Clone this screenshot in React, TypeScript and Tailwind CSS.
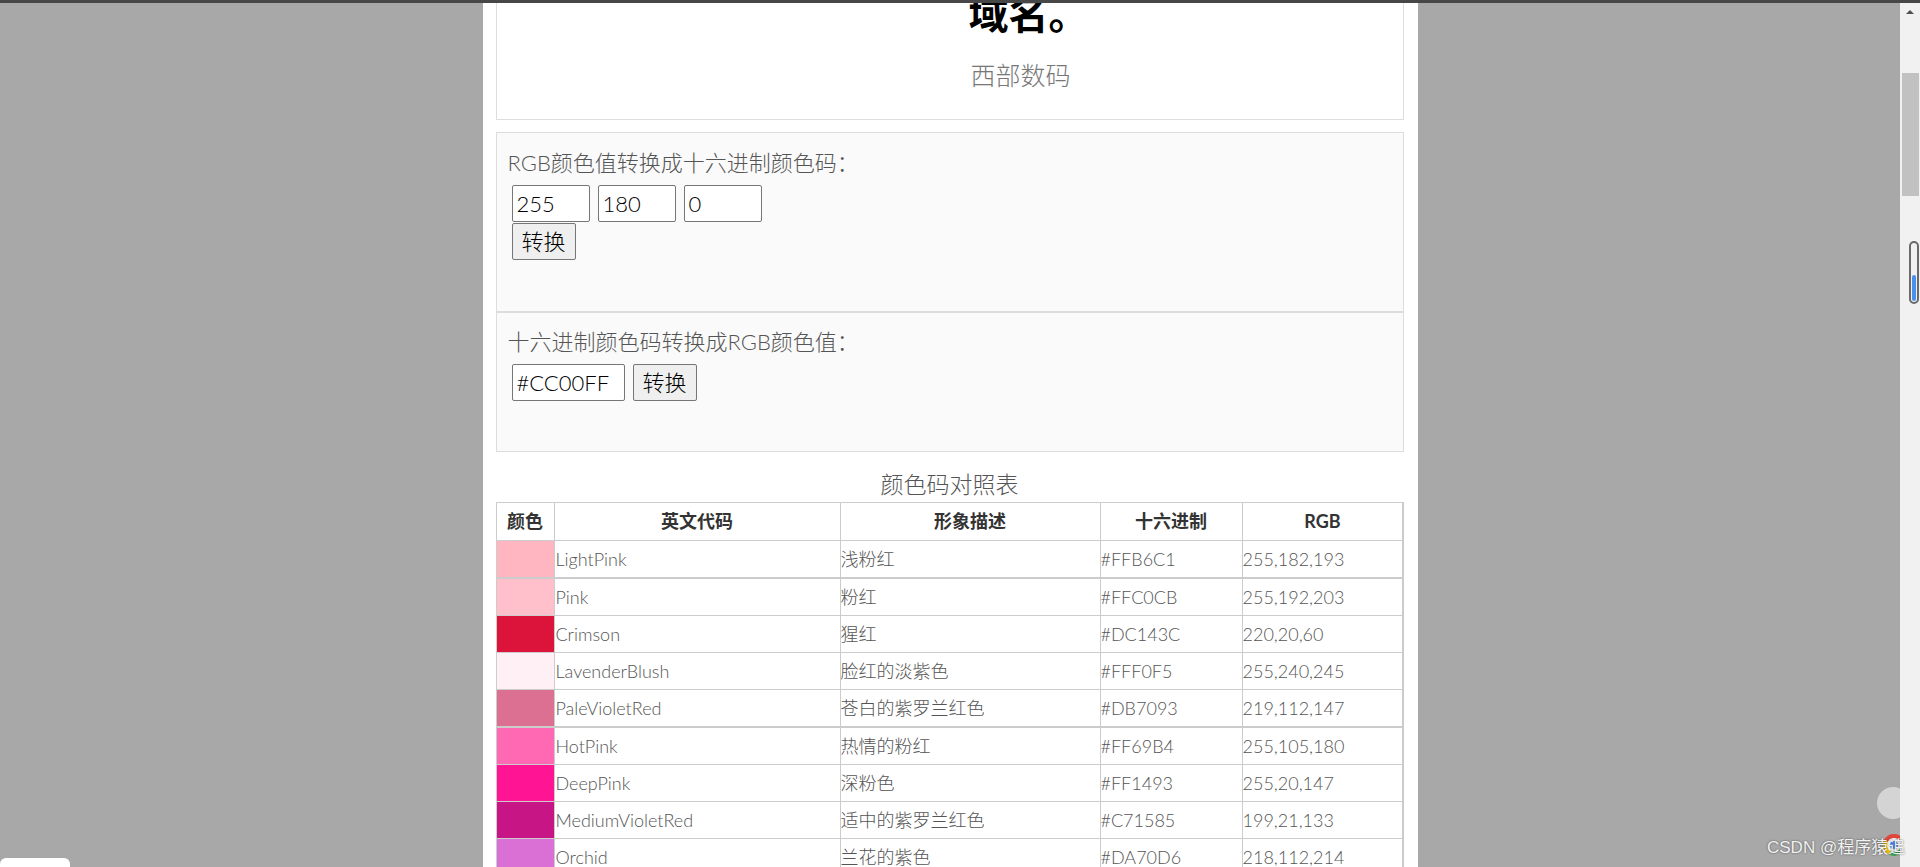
import React from "react";

type ColorRow = {
  swatch: string;
  name: string;
  desc: string;
  hex: string;
  rgb: string;
  thick?: boolean;
};

const rows: ColorRow[] = [
  { swatch: "bg-[#FFB6C1]", name: "LightPink", desc: "浅粉红", hex: "#FFB6C1", rgb: "255,182,193", thick: true },
  { swatch: "bg-[#FFC0CB]", name: "Pink", desc: "粉红", hex: "#FFC0CB", rgb: "255,192,203" },
  { swatch: "bg-[#DC143C]", name: "Crimson", desc: "猩红", hex: "#DC143C", rgb: "220,20,60" },
  { swatch: "bg-[#FFF0F5]", name: "LavenderBlush", desc: "脸红的淡紫色", hex: "#FFF0F5", rgb: "255,240,245" },
  { swatch: "bg-[#DB7093]", name: "PaleVioletRed", desc: "苍白的紫罗兰红色", hex: "#DB7093", rgb: "219,112,147", thick: true },
  { swatch: "bg-[#FF69B4]", name: "HotPink", desc: "热情的粉红", hex: "#FF69B4", rgb: "255,105,180" },
  { swatch: "bg-[#FF1493]", name: "DeepPink", desc: "深粉色", hex: "#FF1493", rgb: "255,20,147" },
  { swatch: "bg-[#C71585]", name: "MediumVioletRed", desc: "适中的紫罗兰红色", hex: "#C71585", rgb: "199,21,133" },
  { swatch: "bg-[#DA70D6]", name: "Orchid", desc: "兰花的紫色", hex: "#DA70D6", rgb: "218,112,214" },
];

const cols = "grid grid-cols-[58px_286px_260px_142px_160px]";

function Input({ value, w }: { value: string; w: string }) {
  return (
    <div
      className={`${w} h-[37px] rounded-[2px] border border-[#767676] bg-white pl-[4px] text-[22px] leading-[35px] font-light text-black`}
    >
      {value}
    </div>
  );
}

function Button() {
  return (
    <button className="h-[37px] w-[64px] rounded-[2px] border border-[#767676] bg-[#efefef] text-[22px] leading-[35px] text-black">
      转换
    </button>
  );
}

export default function App() {
  return (
    <div className="relative h-[867px] w-[1920px] overflow-hidden bg-[#a8a8a8] font-['Lato','Noto_Sans_CJK_SC',sans-serif]">
      {/* top bar */}
      <div className="h-[3px] bg-[#474747]" />

      <div className="flex h-[864px]">
        <main className="flex-1 overflow-hidden">
          <div className="mx-auto h-full w-[935px] bg-white pl-[13px] pr-[14px]">
            {/* Header card */}
            <div className="flex h-[117px] flex-col items-center border-x border-b border-[#ddd] pl-[142px]">
              <div className="-mt-[9px] h-[40px] pl-[16px] text-[40px] leading-[40px] font-bold text-black">
                域名。
              </div>
              <div className="mt-[25px] text-[25px] leading-[32px] font-light text-[#777]">
                西部数码
              </div>
            </div>

            {/* RGB -> HEX */}
            <div className="mt-[12px] h-[180px] border border-[#ddd] bg-[#fafafa] pt-[15px] font-light text-[#555]">
              <div className="pl-[11px] text-[22px] leading-[30px]">
                RGB颜色值转换成十六进制颜色码：
              </div>
              <div className="mt-[7px] pl-[15px]">
                <div className="flex gap-[8px]">
                  <Input value="255" w="w-[78px]" />
                  <Input value="180" w="w-[78px]" />
                  <Input value="0" w="w-[78px]" />
                </div>
                <div className="mt-[1px]">
                  <Button />
                </div>
              </div>
            </div>

            {/* HEX -> RGB */}
            <div className="h-[140px] border border-[#ddd] bg-[#fafafa] pt-[14px] font-light text-[#555]">
              <div className="pl-[11px] text-[22px] leading-[30px]">
                十六进制颜色码转换成RGB颜色值：
              </div>
              <div className="mt-[7px] flex gap-[8px] pl-[15px]">
                <Input value="#CC00FF" w="w-[113px]" />
                <Button />
              </div>
            </div>

            {/* Table */}
            <div className="mb-[3px] pt-[17px] text-center text-[23px] leading-[30px] font-light text-[#555]">
              颜色码对照表
            </div>
            <div className="border-t border-l border-r-2 border-[#ccc] text-[18px]">
              <div className={`${cols} h-[38px] border-b border-[#ccc] font-bold text-[#333]`}>
                {["颜色", "英文代码", "形象描述", "十六进制", "RGB"].map((h, i) => (
                  <div
                    key={h}
                    className={`flex items-center justify-center ${i < 4 ? "border-r border-[#ccc]" : ""}`}
                  >
                    {h}
                  </div>
                ))}
              </div>
              {rows.map((r) => (
                <div
                  key={r.name}
                  className={`${cols} ${r.thick ? "h-[38px] border-b-2" : "h-[37px] border-b"} border-[#ccc] font-light text-[#555]`}
                >
                  <div className={`${r.swatch} border-r border-[#ccc]`} />
                  <div className="flex items-center border-r border-[#ccc] pl-[1px]">{r.name}</div>
                  <div className="flex items-center border-r border-[#ccc]">{r.desc}</div>
                  <div className="flex items-center border-r border-[#ccc]">{r.hex}</div>
                  <div className="flex items-center">{r.rgb}</div>
                </div>
              ))}
            </div>
          </div>
        </main>

        {/* scrollbar */}
        <aside className="relative z-10 flex w-[20px] flex-col items-center bg-[#f1f1f1]">
          <div className="mt-[7px] h-0 w-0 border-x-[4px] border-b-[4px] border-x-transparent border-b-[#505050]" />
          <div className="mt-[59px] h-[123px] w-[17px] bg-[#c1c1c1]" />
          {/* extension pill */}
          <div className="absolute top-[238px] left-[9px] flex h-[63px] w-[10px] flex-col justify-end rounded-full border-2 border-[#6a6a6a] bg-[#f1f1f1] p-[1px]">
            <div className="h-[26px] rounded-full bg-[#4a90f0]" />
          </div>
        </aside>
      </div>

      {/* floating widgets */}
      <div className="absolute top-[787px] left-[1877px] h-[32px] w-[32px] rounded-full bg-[#d4d4d4]" />
      <svg className="absolute top-[832px] left-[1881px]" width="26" height="26" viewBox="0 0 26 26">
        <circle cx="13" cy="13" r="10" fill="#f4f4f4" />
        <path d="M5 9 A9 9 0 0 1 21 9" stroke="#e0463a" strokeWidth="4" fill="none" />
        <path d="M5 9 A9 9 0 0 0 9 21" stroke="#f4c20d" strokeWidth="4" fill="none" />
        <path d="M9 21 A9 9 0 0 0 21 17" stroke="#3aa757" strokeWidth="4" fill="none" />
        <circle cx="13" cy="13" r="4" fill="#4a85f0" />
      </svg>
      <div className="absolute top-[837px] left-[1767px] z-20 text-[17px] leading-[22px] whitespace-nowrap text-[#f2f2f2] [text-shadow:0_0_2px_rgba(0,0,0,0.6)] font-['Liberation_Sans','Noto_Sans_CJK_SC',sans-serif]">
        CSDN @程序猿追
      </div>
      <div className="absolute bottom-0 left-0 h-[9px] w-[70px] rounded-t-[6px] bg-white" />
    </div>
  );
}
